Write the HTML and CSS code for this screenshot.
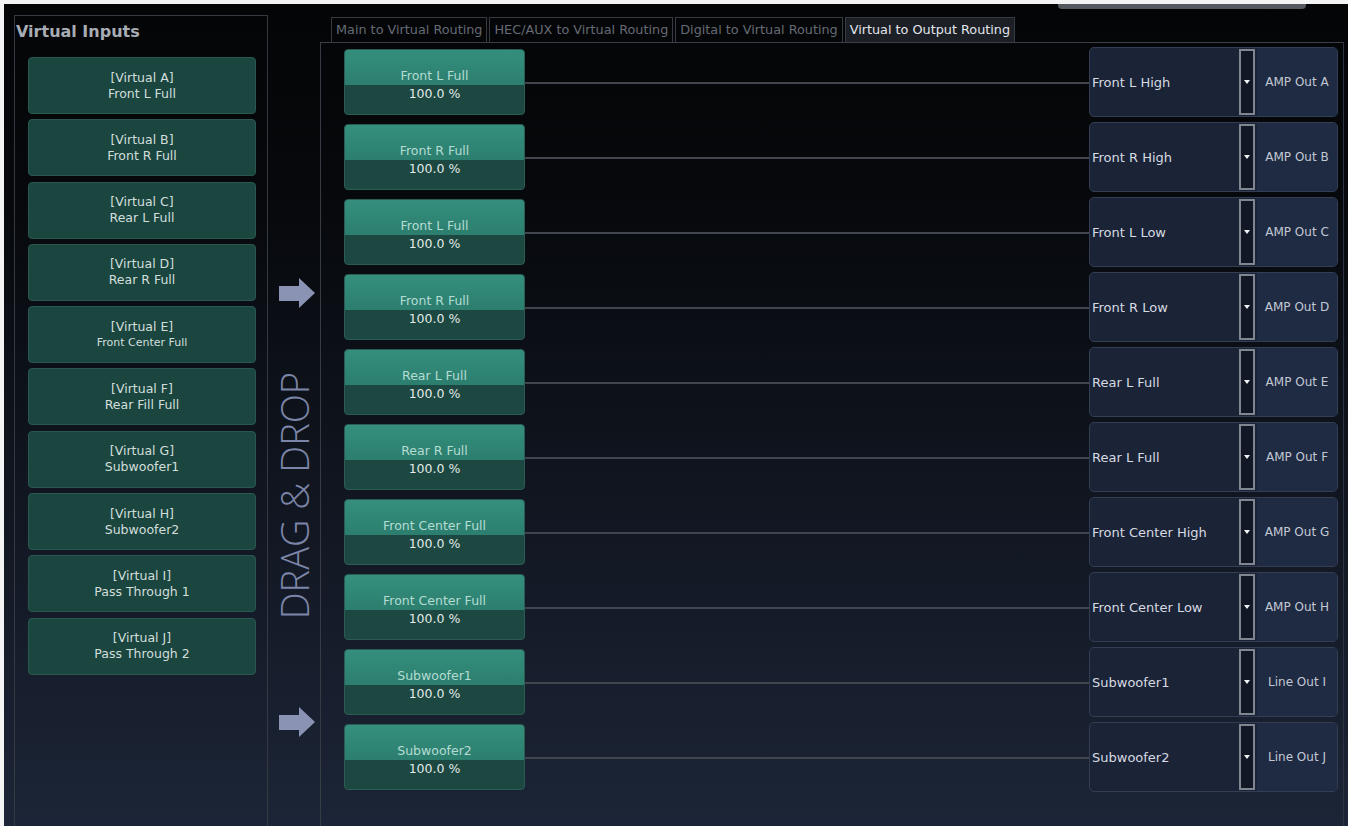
FILE: index.html
```html
<!Doctype html>
<html lang="en">
<head>
  <meta charset="utf-8">
  <title>Virtual to Output Routing</title>
  <link rel="stylesheet" href="styles.css">
</head>
<body>

  <div class='app'>

    <div class='inputsPanel'>
      <h2 class='panelTitle'>Virtual Inputs</h2>
      <div class='inputList'>
        <div class='inputBtn'><span>[Virtual A]</span><span>Front L Full</span></div>
        <div class='inputBtn'><span>[Virtual B]</span><span>Front R Full</span></div>
        <div class='inputBtn'><span>[Virtual C]</span><span>Rear L Full</span></div>
        <div class='inputBtn'><span>[Virtual D]</span><span>Rear R Full</span></div>
        <div class='inputBtn'><span>[Virtual E]</span><span class='small'>Front Center Full</span></div>
        <div class='inputBtn'><span>[Virtual F]</span><span>Rear Fill Full</span></div>
        <div class='inputBtn'><span>[Virtual G]</span><span>Subwoofer1</span></div>
        <div class='inputBtn'><span>[Virtual H]</span><span>Subwoofer2</span></div>
        <div class='inputBtn'><span>[Virtual I]</span><span>Pass Through 1</span></div>
        <div class='inputBtn'><span>[Virtual J]</span><span>Pass Through 2</span></div>
      </div>
    </div>

    <div class='dndStrip'>
      <svg class='arrow arrowTop' viewBox="0 0 36 30" width="36" height="30"><polygon points="0,8 20,8 20,0 36,15 20,30 20,23 0,23"/></svg>
      <div class='dndText'>DRAG &amp; DROP</div>
      <svg class='arrow arrowBottom' viewBox="0 0 36 30" width="36" height="30"><polygon points="0,8 20,8 20,0 36,15 20,30 20,23 0,23"/></svg>
    </div>

    <div class='routing'>
      <div class='routingHead'>
        <div class='tabs'>
          <div class='tab'>Main to Virtual Routing</div>
          <div class='tab'>HEC/AUX to Virtual Routing</div>
          <div class='tab'>Digital to Virtual Routing</div>
          <div class='tab active'>Virtual to Output Routing</div>
        </div>
        <div class='topBar'></div>
      </div>

      <div class='routingBody'>
        <div class='routeRow'>
          <div class='source'><div class='sourceName'>Front L Full</div><div class='sourceLevel'>100.0 %</div></div>
          <div class='wire'></div>
          <div class='output'><div class='outputName'>Front L High</div><div class='outputDrop'><span class='caret'></span></div><div class='outputPort'>AMP Out A</div></div>
        </div>
        <div class='routeRow'>
          <div class='source'><div class='sourceName'>Front R Full</div><div class='sourceLevel'>100.0 %</div></div>
          <div class='wire'></div>
          <div class='output'><div class='outputName'>Front R High</div><div class='outputDrop'><span class='caret'></span></div><div class='outputPort'>AMP Out B</div></div>
        </div>
        <div class='routeRow'>
          <div class='source'><div class='sourceName'>Front L Full</div><div class='sourceLevel'>100.0 %</div></div>
          <div class='wire'></div>
          <div class='output'><div class='outputName'>Front L Low</div><div class='outputDrop'><span class='caret'></span></div><div class='outputPort'>AMP Out C</div></div>
        </div>
        <div class='routeRow'>
          <div class='source'><div class='sourceName'>Front R Full</div><div class='sourceLevel'>100.0 %</div></div>
          <div class='wire'></div>
          <div class='output'><div class='outputName'>Front R Low</div><div class='outputDrop'><span class='caret'></span></div><div class='outputPort'>AMP Out D</div></div>
        </div>
        <div class='routeRow'>
          <div class='source'><div class='sourceName'>Rear L Full</div><div class='sourceLevel'>100.0 %</div></div>
          <div class='wire'></div>
          <div class='output'><div class='outputName'>Rear L Full</div><div class='outputDrop'><span class='caret'></span></div><div class='outputPort'>AMP Out E</div></div>
        </div>
        <div class='routeRow'>
          <div class='source'><div class='sourceName'>Rear R Full</div><div class='sourceLevel'>100.0 %</div></div>
          <div class='wire'></div>
          <div class='output'><div class='outputName'>Rear L Full</div><div class='outputDrop'><span class='caret'></span></div><div class='outputPort'>AMP Out F</div></div>
        </div>
        <div class='routeRow'>
          <div class='source'><div class='sourceName'>Front Center Full</div><div class='sourceLevel'>100.0 %</div></div>
          <div class='wire'></div>
          <div class='output'><div class='outputName'>Front Center High</div><div class='outputDrop'><span class='caret'></span></div><div class='outputPort'>AMP Out G</div></div>
        </div>
        <div class='routeRow'>
          <div class='source'><div class='sourceName'>Front Center Full</div><div class='sourceLevel'>100.0 %</div></div>
          <div class='wire'></div>
          <div class='output'><div class='outputName'>Front Center Low</div><div class='outputDrop'><span class='caret'></span></div><div class='outputPort'>AMP Out H</div></div>
        </div>
        <div class='routeRow'>
          <div class='source'><div class='sourceName'>Subwoofer1</div><div class='sourceLevel'>100.0 %</div></div>
          <div class='wire'></div>
          <div class='output'><div class='outputName'>Subwoofer1</div><div class='outputDrop'><span class='caret'></span></div><div class='outputPort'>Line Out I</div></div>
        </div>
        <div class='routeRow'>
          <div class='source'><div class='sourceName'>Subwoofer2</div><div class='sourceLevel'>100.0 %</div></div>
          <div class='wire'></div>
          <div class='output'><div class='outputName'>Subwoofer2</div><div class='outputDrop'><span class='caret'></span></div><div class='outputPort'>Line Out J</div></div>
        </div>
      </div>
    </div>

  </div>

</body>
</html>
```

FILE: styles.css
```css
body {
  margin: 0;
  background: #f4f4f4;
  font-family: "DejaVu Sans", sans-serif;
}

.app {
  display: flex;
  height: 822px;
  margin: 4px 0 0 4px;
  background: linear-gradient(#040507 0%, #06080b 22%, #10151f 58%, #1c2537 100%);
  overflow: hidden;
}

/* left column */
.inputsPanel {
  width: 254px;
  margin: 11px 0 0 10px;
  box-sizing: border-box;
  border: 1px solid #353a42;
  border-bottom: none;
}

.panelTitle {
  margin: 0;
  height: 41px;
  padding: 6px 0 0 1px;
  box-sizing: border-box;
  font-size: 16px;
  line-height: 20px;
  font-weight: bold;
  color: #a8adb5;
}

.inputList {
  display: flex;
  flex-direction: column;
  gap: 5.3px;
  padding: 0 11px 0 13px;
}

.inputBtn {
  height: 57px;
  box-sizing: border-box;
  display: flex;
  flex-direction: column;
  align-items: center;
  justify-content: center;
  background: #1b4640;
  border: 1px solid #2a5750;
  border-radius: 4px;
  color: #d2dedb;
  font-size: 12.5px;
  line-height: 16px;
}

.inputBtn .small {
  font-size: 11px;
}

/* drag & drop strip */
.dndStrip {
  width: 52px;
  display: flex;
  flex-direction: column;
  align-items: center;
}

.arrow {
  fill: #8a93b3;
  margin-left: 6px;
}

.arrowTop {
  margin-top: 274px;
}

.dndText {
  margin-top: 64px;
  writing-mode: vertical-rl;
  transform: rotate(180deg);
  font-family: "Open Sans", sans-serif;
  font-weight: 300;
  font-size: 38px;
  line-height: 40px;
  color: #7c85a7;
  white-space: nowrap;
}

.arrowBottom {
  margin-top: 88px;
}

/* routing area */
.routing {
  flex: 1;
  display: flex;
  flex-direction: column;
  margin-right: 4px;
}

.routingHead {
  height: 38px;
  display: flex;
  align-items: flex-start;
}

.tabs {
  display: flex;
  margin: 13px 0 0 11px;
  height: 25px;
}

.tab {
  padding: 0 4px;
  margin-right: 2px;
  border: 1px solid #363a41;
  border-bottom: none;
  font-size: 12.8px;
  line-height: 24px;
  color: #656b74;
}

.tab.active {
  background: #1c2026;
  color: #e2e5ea;
}

.topBar {
  margin-left: 41px;
  width: 248px;
  height: 5px;
  background: #55585e;
  border-radius: 0 0 4px 4px;
}

.routingBody {
  flex: 1;
  display: flex;
  flex-direction: column;
  gap: 5px;
  padding: 4px 5px 0 23px;
  border-top: 1px solid #3a3e46;
  border-left: 1px solid #363b44;
  border-right: 1px solid #2c3342;
}

.routeRow {
  height: 70px;
  display: flex;
  align-items: center;
}

.source {
  width: 181px;
  height: 66px;
  box-sizing: border-box;
  border: 1px solid #2b5c54;
  border-radius: 4px;
  overflow: hidden;
  background: #1d4741;
  font-size: 12.5px;
  line-height: 14px;
  text-align: center;
}

.sourceName {
  height: 35px;
  box-sizing: border-box;
  padding-bottom: 2px;
  display: flex;
  align-items: flex-end;
  justify-content: center;
  background: linear-gradient(#358f7d, #2c7e6e);
  color: #b4dcd2;
}

.sourceLevel {
  padding-top: 2px;
  color: #e2ebe8;
}

.wire {
  flex: 1;
  height: 2px;
  margin-top: 2px;
  background: #40454e;
}

.output {
  width: 249px;
  height: 70px;
  box-sizing: border-box;
  display: flex;
  background: #1b2336;
  border: 1px solid #333e54;
  border-radius: 5px;
}

.outputName {
  width: 147px;
  padding-left: 2px;
  display: flex;
  align-items: center;
  font-size: 13px;
  color: #d6dae2;
  white-space: nowrap;
  overflow: hidden;
}

.outputDrop {
  width: 16px;
  margin: 1px 0;
  box-sizing: border-box;
  border: 2px solid #80868f;
  background: #111725;
  display: flex;
  align-items: center;
  justify-content: center;
}

.caret {
  width: 0;
  height: 0;
  border-left: 3px solid transparent;
  border-right: 3px solid transparent;
  border-top: 4px solid #f0f2f5;
}

.outputPort {
  flex: 1;
  margin-left: 2px;
  display: flex;
  align-items: center;
  justify-content: center;
  background: #1f2a43;
  border-radius: 0 4px 4px 0;
  font-size: 12px;
  color: #c3c9d3;
  white-space: nowrap;
}
```
